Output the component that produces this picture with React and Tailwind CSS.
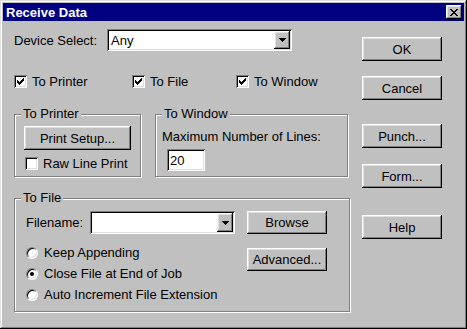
import React from 'react';

const raised =
  'bg-[#c0c0c0] shadow-[inset_-1px_-1px_#000,inset_1px_1px_#fff,inset_-2px_-2px_#808080,inset_2px_2px_#dfdfdf]';
const sunken =
  'bg-white shadow-[inset_1px_1px_#808080,inset_-1px_-1px_#fff,inset_2px_2px_#000,inset_-2px_-2px_#dfdfdf]';

// Win95 check mark, pixel columns
const checkCols = [2, 3, 4, 3, 2, 1, 0];

const CheckBox = ({ checked, label, className = '' }) => (
  <div className={`flex items-center h-[15px] ${className}`}>
    <div className={`relative w-[13px] h-[13px] shrink-0 ${sunken}`}>
      {checked && (
        <svg className="absolute left-[3px] top-[3px]" width="7" height="7" viewBox="0 0 7 7" shapeRendering="crispEdges">
          {checkCols.map((y, x) => (
            <rect key={x} x={x} y={y} width="1" height="3" fill="#000" />
          ))}
        </svg>
      )}
    </div>
    <span className="ml-[5px]">{label}</span>
  </div>
);

const Radio = ({ checked, label }) => (
  <div className="flex items-center h-[21px]">
    <div className="relative w-[12px] h-[12px] shrink-0 rounded-full bg-white border border-t-[#808080] border-l-[#808080] border-b-white border-r-white shadow-[inset_1px_1px_#000,inset_-1px_-1px_#dfdfdf]">
      {checked && <div className="absolute left-[3px] top-[3px] w-[4px] h-[4px] rounded-full bg-black" />}
    </div>
    <span className="ml-[6px]">{label}</span>
  </div>
);

const Button = ({ children, className = '' }) => (
  <div className={`flex items-center justify-center ${raised} ${className}`}>{children}</div>
);

const Combo = ({ value, className = '' }) => (
  <div className={`relative flex items-center pl-[4px] ${sunken} ${className}`}>
    <span>{value}</span>
    <div className={`absolute right-[2px] top-[2px] bottom-[2px] w-[16px] flex items-center justify-center ${raised}`}>
      <svg width="7" height="4" viewBox="0 0 7 4" shapeRendering="crispEdges">
        <path d="M0 0h7v1H0zM1 1h5v1H1zM2 2h3v1H2zM3 3h1v1H3z" fill="#000" />
      </svg>
    </div>
  </div>
);

const Group = ({ title, className = '', children }) => (
  <div className={`relative border border-[#808080] shadow-[inset_1px_1px_#fff,1px_1px_#fff] ${className}`}>
    <span className="absolute -top-[9px] left-[6px] px-[2px] bg-[#c0c0c0] leading-[15px]">{title}</span>
    {children}
  </div>
);

export default function App() {
  return (
    <div
      className="w-[467px] h-[329px] bg-[#c0c0c0] p-[3px] text-[13px] leading-[15px] text-black shadow-[inset_-1px_-1px_#000,inset_1px_1px_#dfdfdf,inset_-2px_-2px_#808080,inset_2px_2px_#fff]"
      style={{ fontFamily: '"Liberation Sans", Arial, sans-serif' }}
    >
      {/* Title bar */}
      <div className="h-[18px] bg-[#000080] flex items-center justify-between pl-[3px] pr-[2px]">
        <span className="text-white font-bold">Receive Data</span>
        <div className={`w-[16px] h-[14px] flex items-center justify-center ${raised}`}>
          <svg width="8" height="7" viewBox="0 0 8 7" shapeRendering="crispEdges">
            <path d="M0 0h2v1H0zM6 0h2v1H6zM1 1h2v1H1zM5 1h2v1H5zM2 2h4v1H2zM3 3h2v1H3zM2 4h4v1H2zM1 5h2v1H1zM5 5h2v1H5zM0 6h2v1H0zM6 6h2v1H6z" fill="#000" />
          </svg>
        </div>
      </div>

      <div className="flex pl-[11px]">
        {/* Left column */}
        <div className="w-[336px] flex flex-col">
          <div className="flex items-center h-[22px] mt-[8px]">
            <span className="w-[93px]">Device Select:</span>
            <Combo value="Any" className="w-[185px] h-[22px]" />
          </div>

          <div className="flex mt-[23px]">
            <CheckBox checked label="To Printer" className="w-[118px]" />
            <CheckBox checked label="To File" className="w-[104px]" />
            <CheckBox checked label="To Window" />
          </div>

          <div className="flex mt-[25px]">
            <Group title="To Printer" className="w-[127px] h-[63px] pl-[9px] pt-[11px]">
              <Button className="w-[107px] h-[24px]">Print Setup...</Button>
              <CheckBox label="Raw Line Print" className="mt-[6px] ml-[1px]" />
            </Group>
            <Group title="To Window" className="w-[193px] h-[63px] ml-[14px] pl-[6px] pt-[14px]">
              <div>Maximum Number of Lines:</div>
              <div className={`w-[38px] h-[22px] mt-[5px] ml-[5px] pl-[3px] flex items-center ${sunken}`}>20</div>
            </Group>
          </div>

          <Group title="To File" className="w-[336px] h-[114px] mt-[21px] pl-[11px] flex">
            <div className="w-[221px] flex flex-col">
              <div className="flex items-center h-[23px] mt-[12px]">
                <span className="w-[64px]">Filename:</span>
                <Combo value="" className="w-[145px] h-[23px]" />
              </div>
              <div className="mt-[8px]">
                <Radio label="Keep Appending" />
                <Radio checked label="Close File at End of Job" />
                <Radio label="Auto Increment File Extension" />
              </div>
            </div>
            <div className="flex flex-col">
              <Button className="w-[80px] h-[23px] mt-[12px]">Browse</Button>
              <Button className="w-[80px] h-[23px] mt-[14px]">Advanced...</Button>
            </div>
          </Group>
        </div>

        {/* Right column */}
        <div className="flex flex-col ml-[12px]">
          <Button className="w-[80px] h-[24px] mt-[16px]">OK</Button>
          <Button className="w-[80px] h-[24px] mt-[15px]">Cancel</Button>
          <Button className="w-[80px] h-[24px] mt-[24px]">Punch...</Button>
          <Button className="w-[80px] h-[24px] mt-[16px]">Form...</Button>
          <Button className="w-[80px] h-[24px] mt-[27px]">Help</Button>
        </div>
      </div>
    </div>
  );
}
